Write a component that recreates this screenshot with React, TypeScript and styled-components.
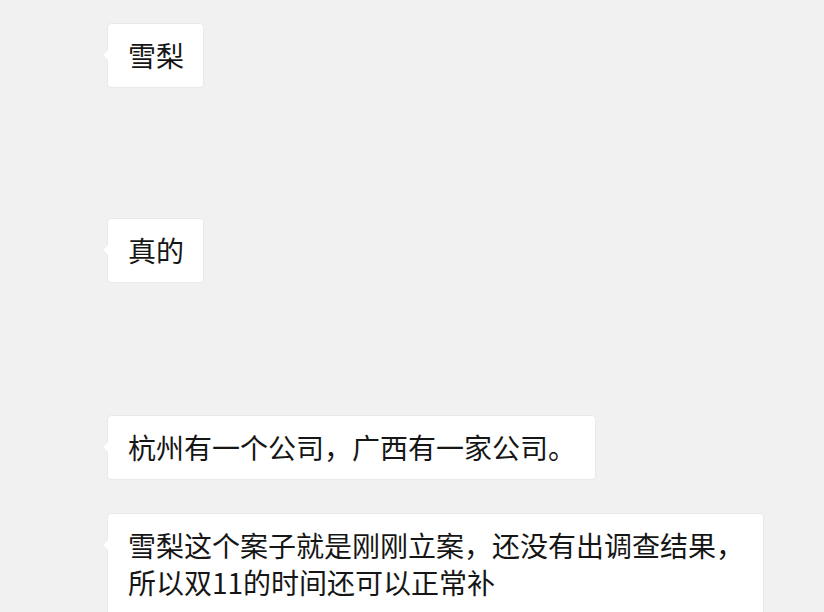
import React from 'react';
import styled, {createGlobalStyle} from 'styled-components';

type Message = {
  id: number;
  text: string;
  gap: number;
};

const MESSAGES: Message[] = [
  {id: 1, text: '雪梨', gap: 23},
  {id: 2, text: '真的', gap: 130},
  {id: 3, text: '杭州有一个公司，广西有一家公司。', gap: 132},
  {
    id: 4,
    text: '雪梨这个案子就是刚刚立案，还没有出调查结果，\n所以双11的时间还可以正常补',
    gap: 33,
  },
];

const App = () => {
  return (
    <>
      <GlobalStyle />
      <Chat>
        {MESSAGES.map((msg) => (
          <Row key={msg.id} gap={msg.gap}>
            <Bubble>{msg.text}</Bubble>
          </Row>
        ))}
      </Chat>
    </>
  );
};

const GlobalStyle = createGlobalStyle`
  html, body {
    margin: 0;
    padding: 0;
    background: #f1f1f1;
  }
  body {
    font-family: "Noto Sans CJK SC", "Noto Sans", sans-serif;
  }
`;

const Chat = styled.div`
  width: 824px;
  height: 612px;
  overflow: hidden;
  display: flex;
  flex-direction: column;
  align-items: flex-start;
  padding-left: 107px;
  box-sizing: border-box;
`;

const Row = styled.div<{gap: number}>`
  margin-top: ${({gap}) => gap}px;
  display: flex;
`;

const Bubble = styled.div`
  position: relative;
  box-sizing: border-box;
  padding: 13px 19px 13px 20px;
  background: #fff;
  border: 1px solid #e9e9e9;
  border-radius: 4px;
  color: #161616;
  font-size: 28px;
  line-height: 37px;
  white-space: pre-line;

  &::before {
    content: '';
    position: absolute;
    left: -6px;
    top: 25px;
    width: 0;
    height: 0;
    border-top: 6px solid transparent;
    border-bottom: 6px solid transparent;
    border-right: 6px solid #e9e9e9;
  }

  &::after {
    content: '';
    position: absolute;
    left: -5px;
    top: 25px;
    width: 0;
    height: 0;
    border-top: 6px solid transparent;
    border-bottom: 6px solid transparent;
    border-right: 6px solid #fff;
  }
`;

export default App;
